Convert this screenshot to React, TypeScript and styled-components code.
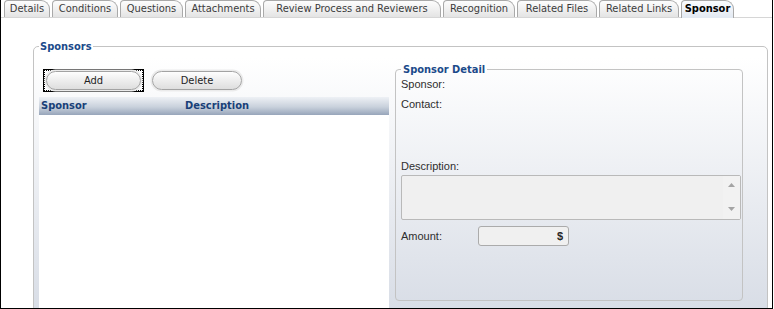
import React from "react"
import styled, { createGlobalStyle, css } from "styled-components"

const tahoma = `"DejaVu Sans Condensed", "DejaVu Sans", Verdana, sans-serif`
const arial = `"Liberation Sans", Arial, sans-serif`

const GlobalStyle = createGlobalStyle`
  html, body {
    margin: 0;
    padding: 0;
    background: #fff;
  }
  body {
    font-family: ${arial};
  }
`

const tabs = [
  { label: "Details", width: 46 },
  { label: "Conditions", width: 66 },
  { label: "Questions", width: 63 },
  { label: "Attachments", width: 76 },
  { label: "Review Process and Reviewers", width: 178 },
  { label: "Recognition", width: 72 },
  { label: "Related Files", width: 80 },
  { label: "Related Links", width: 80 },
  { label: "Sponsor", width: 53, active: true },
]

const Frame = styled.div`
  width: 773px;
  height: 309px;
  box-sizing: border-box;
  border: 1px solid #000;
  border-top: none;
  overflow: hidden;
  display: flex;
  flex-direction: column;
  background: #fff;
`

const TabStrip = styled.div`
  display: flex;
  align-items: flex-end;
  height: 20px;
  padding-left: 3px;
  border-bottom: 1px solid #d6d6d6;
`

const Tab = styled.div<{ $w: number; $active?: boolean }>`
  width: ${(p) => p.$w}px;
  height: 17px;
  box-sizing: border-box;
  margin-right: 2px;
  border: 1px solid #a9a9a9;
  border-bottom: none;
  border-radius: 4px 9px 0 0;
  background: linear-gradient(#fdfdfd, #e4e4e4);
  font-family: ${tahoma};
  font-stretch: condensed;
  font-size: 11px;
  line-height: 16px;
  color: #3c3c3c;
  text-align: center;
  white-space: nowrap;
  ${(p) =>
    p.$active &&
    css`
      height: 18px;
      margin-bottom: -1px;
      font-weight: bold;
      color: #000;
      background: linear-gradient(#fbfcfe, #e2e9f2);
    `}
`

const Panel = styled.div`
  flex: 1;
  padding: 22px 4px 0 32px;
`

const Group = styled.fieldset`
  display: flex;
  align-items: stretch;
  margin: 0;
  padding: 10px 0 0 5px;
  height: 272px;
  box-sizing: border-box;
  min-width: 0;
  border: 1px solid #c3c3c3;
  border-radius: 5px;
  background: linear-gradient(#ffffff 4%, #d8dde6 100%);
`

const Legend = styled.legend`
  padding: 0 1px;
  font-family: ${tahoma};
  font-stretch: condensed;
  font-weight: bold;
  font-size: 11px;
  line-height: 13px;
  color: #1b4a8a;
`

const ListColumn = styled.div`
  width: 350px;
  display: flex;
  flex-direction: column;
  padding-top: 6px;
`

const ButtonRow = styled.div`
  display: flex;
  align-items: center;
  gap: 8px;
  height: 23px;
  padding-left: 4px;
`

const FocusRing = styled.div`
  width: 101px;
  height: 23px;
  box-sizing: border-box;
  border: 1px solid #000;
  display: flex;
`

const FocusDots = styled.div`
  flex: 1;
  border: 1px dotted #000;
  display: flex;
  padding: 0 1px;
`

const PillButton = styled.button<{ $w?: number }>`
  ${(p) => (p.$w ? `width: ${p.$w}px;` : "flex: 1;")}
  height: 19px;
  margin: 0;
  padding: 0;
  border: 1px solid #a3a3a3;
  border-radius: 10px;
  background: linear-gradient(#fefefe, #ececec 55%, #dedede);
  box-shadow: 0 0 0 1.5px #ebebeb;
  font-family: ${tahoma};
  font-stretch: condensed;
  font-size: 11px;
  color: #1e1e1e;
`

const GridHeader = styled.div`
  display: flex;
  height: 18px;
  margin-top: 5px;
  background: linear-gradient(#eef1f5, #c9d1dc 55%, #97a5ba);
  font-family: ${tahoma};
  font-stretch: condensed;
  font-weight: bold;
  font-size: 11px;
  line-height: 18px;
  color: #183f78;
`

const HeaderCell = styled.div<{ $w?: number }>`
  ${(p) => (p.$w ? `width: ${p.$w}px;` : "flex: 1;")}
  box-sizing: border-box;
  padding-left: 2px;
`

const GridBody = styled.div`
  flex: 1;
  background: #fff;
`

const DetailGroup = styled.fieldset`
  align-self: flex-start;
  width: 348px;
  height: 238px;
  box-sizing: border-box;
  margin: 0 0 0 6px;
  padding: 0 1px 0 5px;
  min-width: 0;
  border: 1px solid #c3c3c3;
  border-radius: 4px;
`

const DetailLegend = styled(Legend)`
  padding: 0 2px;
`

const Field = styled.div<{ $gap?: number }>`
  font-size: 11px;
  line-height: 20px;
  color: #2e2e2e;
  margin-top: ${(p) => p.$gap ?? 0}px;
`

const Caption = styled.div`
  font-size: 11px;
  line-height: 16px;
  color: #2e2e2e;
  margin-top: 44px;
`

const TextBox = styled.div`
  height: 45px;
  margin-top: 1px;
  box-sizing: border-box;
  border: 1px solid #b9b9b9;
  border-radius: 2px;
  background: #f0f0f0;
  display: flex;
  justify-content: flex-end;
`

const ScrollTrack = styled.div`
  width: 17px;
  display: flex;
  flex-direction: column;
  justify-content: space-between;
  align-items: center;
  padding: 7px 0 8px;
  background: #f2f2f2;
`

const AmountRow = styled.div`
  display: flex;
  align-items: center;
  margin-top: 6px;
  font-size: 11px;
  color: #2e2e2e;
`

const AmountLabel = styled.div`
  width: 77px;
`

const AmountInput = styled.div`
  width: 91px;
  height: 20px;
  box-sizing: border-box;
  border: 1px solid #ababab;
  border-radius: 3px;
  background: #f0f0f0;
  text-align: right;
  padding-right: 5px;
  line-height: 18px;
  font-weight: bold;
  color: #262626;
`

const Arrow = ({ up }: { up?: boolean }) => (
  <svg width="7" height="4" viewBox="0 0 7 4">
    <path d={up ? "M0 4 L3.5 0 L7 4 Z" : "M0 0 L3.5 4 L7 0 Z"} fill="#a4a4a4" />
  </svg>
)

const App = function () {
  return (
    <>
      <GlobalStyle />
      <Frame>
        <TabStrip>
          {tabs.map((t) => (
            <Tab key={t.label} $w={t.width} $active={t.active}>
              {t.label}
            </Tab>
          ))}
        </TabStrip>
        <Panel>
          <Group>
            <Legend>Sponsors</Legend>
            <ListColumn>
              <ButtonRow>
                <FocusRing>
                  <FocusDots>
                    <PillButton>Add</PillButton>
                  </FocusDots>
                </FocusRing>
                <PillButton $w={90}>Delete</PillButton>
              </ButtonRow>
              <GridHeader>
                <HeaderCell $w={144}>Sponsor</HeaderCell>
                <HeaderCell>Description</HeaderCell>
              </GridHeader>
              <GridBody />
            </ListColumn>
            <DetailGroup>
              <DetailLegend>Sponsor Detail</DetailLegend>
              <Field $gap={-2}>Sponsor:</Field>
              <Field>Contact:</Field>
              <Caption>Description:</Caption>
              <TextBox>
                <ScrollTrack>
                  <Arrow up />
                  <Arrow />
                </ScrollTrack>
              </TextBox>
              <AmountRow>
                <AmountLabel>Amount:</AmountLabel>
                <AmountInput>$</AmountInput>
              </AmountRow>
            </DetailGroup>
          </Group>
        </Panel>
      </Frame>
    </>
  )
}

export default App
